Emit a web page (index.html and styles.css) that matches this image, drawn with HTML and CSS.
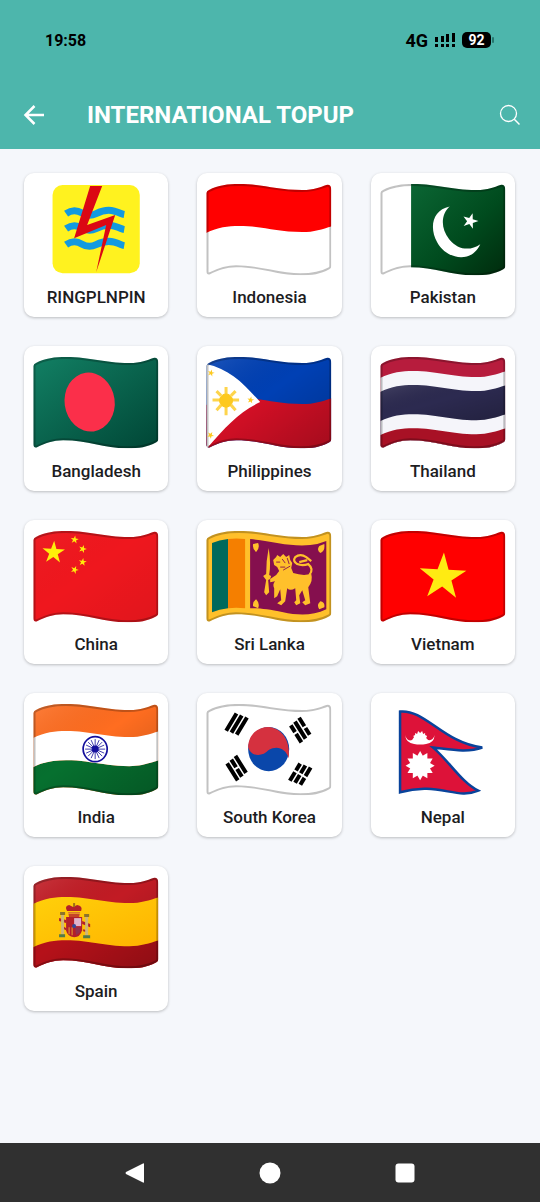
FILE: index.html
```html
<!DOCTYPE html>
<html lang="en">
<head>
<meta charset="utf-8">
<meta name="viewport" content="width=device-width, initial-scale=1">
<title>International Topup</title>
<link rel="stylesheet" href="styles.css">
</head>
<body>
<svg class="defs" width="0" height="0" aria-hidden="true">
  <defs>
    <path id="outline" d="M.5 10Q.5 8 3 7C12 2 22 1 33 1C58 1 70 7 96 7C108 7 114 4 120 2Q125 1 125 7V83Q125 85 123 86C114 91 106 92 94 92C70 92 55 84 30 84C20 84 12 87 4 91Q.5 92 .5 88Z"/>
    <path id="wave" d="M0 8C12 2 22 1 33 1C58 1 70 7 96 7C108 7 116 4 126 1V130H0Z"/>
    <clipPath id="cloth"><use href="#outline"/></clipPath>
    <linearGradient id="shade" x1="0" y1="0" x2="1" y2="1"><stop offset="0" stop-color="#fff" stop-opacity=".12"/><stop offset=".45" stop-color="#000" stop-opacity="0"/><stop offset="1" stop-color="#000" stop-opacity=".22"/></linearGradient>
    <linearGradient id="pak" x1="0" y1="0" x2="1" y2="1"><stop offset="0" stop-color="#0b6634"/><stop offset=".55" stop-color="#004b1e"/><stop offset="1" stop-color="#002a0c"/></linearGradient>
    <linearGradient id="bgd" x1="0" y1="0" x2="1" y2="1"><stop offset="0" stop-color="#128064"/><stop offset="1" stop-color="#004535"/></linearGradient>
    <linearGradient id="gold" x1="0" y1="0" x2="1" y2="1"><stop offset="0" stop-color="#ffd00a"/><stop offset="1" stop-color="#ffb300"/></linearGradient>
    <polygon id="star" points="0,-10 2.25,-3.09 9.51,-3.09 3.63,1.18 5.88,8.09 0,3.82 -5.88,8.09 -3.63,1.18 -9.51,-3.09 -2.25,-3.09"/>
    <use id="edge" href="#outline" fill="none" stroke="#000" stroke-opacity=".24" stroke-width="4"/>
    <use id="fold" href="#outline" fill="url(#shade)"/>
    <path id="ripple" d="M14 28.500C19 25 25 25 30 28S39 31 44 28.500S55 24 62 26S69 29 72 29.500"/>
  </defs>
</svg>

<header class="top">
  <div class="status">
    <span class="time">19:58</span>
    <div class="signals">
      <span class="network">4G</span>
      <svg class="bars" viewBox="0 0 22 14" aria-hidden="true"><g fill="#000"><path d="M1 4h3v5H1zM7 3h3v6H7zM12 1h3v8h-3zM18 0h3v9h-3z"/><path d="M1 11h3v3H1zM7 11h3v3H7zM12 11h3v3h-3zM18 11h3v3h-3z"/></g></svg>
      <span class="battery">92</span>
    </div>
  </div>
  <div class="appbar">
    <button class="icon-button" type="button" aria-label="Back"><svg class="back" viewBox="0 0 22 22"><path d="M11.500 2L2.500 11l9 9M2.500 11h18.500" fill="none" stroke="#fff" stroke-width="2.500"/></svg></button>
    <h1 class="title">INTERNATIONAL TOPUP</h1>
    <button class="icon-button" type="button" aria-label="Search"><svg class="search" viewBox="0 0 22 22"><circle cx="9.500" cy="9.500" r="8" fill="none" stroke="#fff" stroke-width="1.300"/><path d="M15.300 15.300L20.500 20.500" stroke="#fff" stroke-width="1.500"/></svg></button>
  </div>
</header>

<main class="grid">
  <a class="card" href="#ringplnpin">
    <svg class="flag" viewBox="0 0 126 94" aria-hidden="true"><g transform="translate(19 2)"><rect x=".5" width="87" height="88" rx="10" fill="#fff21f"/><g fill="none" stroke="#129ae0" stroke-width="7"><use href="#ripple"/><use href="#ripple" y="15"/><use href="#ripple" y="31"/></g><path d="M38 1H50L35 40L63 30L44 87L54 40L22 53Z" fill="#db0713"/></g></svg>
    <span class="name">RINGPLNPIN</span>
  </a>
  <a class="card" href="#indonesia">
    <svg class="flag" viewBox="0 0 126 94" aria-hidden="true"><g clip-path="url(#cloth)"><rect width="126" height="94" fill="#fff"/><path d="M0 0H126V43C116 46 108 49 96 49C70 49 58 43 33 43C22 43 12 44 0 50Z" fill="#f00"/><use href="#edge"/></g></svg>
    <span class="name">Indonesia</span>
  </a>
  <a class="card" href="#pakistan">
    <svg class="flag" viewBox="0 0 126 94" aria-hidden="true"><g clip-path="url(#cloth)"><rect width="126" height="94" fill="#fff"/><rect x="31" width="95" height="94" fill="url(#pak)"/><use href="#edge"/></g><path d="M69.500 23.500C52 27 49 45 57 59C66 76 91 81 100 61C90 68 78 67 69 56C60 45 61 31 69.500 23.500Z" fill="#fff"/><use href="#star" fill="#fff" transform="translate(90 38) rotate(17) scale(.82)"/></svg>
    <span class="name">Pakistan</span>
  </a>
  <a class="card" href="#bangladesh">
    <svg class="flag" viewBox="0 0 126 94" aria-hidden="true"><g clip-path="url(#cloth)"><rect width="126" height="94" fill="url(#bgd)"/><ellipse cx="56.500" cy="46" rx="25" ry="29.500" fill="#fb2f4a" transform="rotate(-8 56.500 46)"/><use href="#edge"/></g></svg>
    <span class="name">Bangladesh</span>
  </a>
  <a class="card" href="#philippines">
    <svg class="flag" viewBox="0 0 126 94" aria-hidden="true"><g clip-path="url(#cloth)"><rect width="126" height="94" fill="#0040b4"/><use href="#wave" y="41" fill="#d20f25"/><use href="#fold"/><path d="M0 8C24 13 38 28 54 46C33 56 20 70 1 92Z" fill="#fff"/><use href="#edge"/></g>
      <g fill="#fdc91f" stroke="#fdc91f"><g stroke-width="3" stroke-opacity=".8"><path d="M20 31V39M20 50V59M6.500 44H14M26 44H33M10.500 35L15 39.500M25 49L29.500 54M29.500 35L25 39.500M15 49L10.500 54"/></g><circle cx="20" cy="44.500" r="6.500"/></g>
      <g fill="#fdc91f"><use href="#star" transform="translate(5 17) rotate(15) scale(.36)"/><use href="#star" transform="translate(44.500 44) rotate(10) scale(.36)"/><use href="#star" transform="translate(4.500 79) rotate(30) scale(.36)"/></g></svg>
    <span class="name">Philippines</span>
  </a>
  <a class="card" href="#thailand">
    <svg class="flag" viewBox="0 0 126 94" aria-hidden="true"><g clip-path="url(#cloth)"><rect width="126" height="94" fill="#b71c3d"/><use href="#wave" y="14" fill="#f5f5fa"/><use href="#wave" y="28" fill="#2c2a50"/><use href="#wave" y="57" fill="#f5f5fa"/><use href="#wave" y="71" fill="#a81125"/><path d="M0 36C12 30 22 29 33 29C58 29 70 35 96 35C108 35 116 32 126 29V58C116 61 108 64 96 64C70 64 58 58 33 58C22 58 12 59 0 65Z" fill="url(#shade)"/><use href="#edge"/></g></svg>
    <span class="name">Thailand</span>
  </a>
  <a class="card" href="#china">
    <svg class="flag" viewBox="0 0 126 94" aria-hidden="true"><g clip-path="url(#cloth)"><rect width="126" height="94" fill="#ef171e"/><rect width="126" height="94" fill="url(#shade)" opacity=".3"/><use href="#edge"/></g><g fill="#ffee0a"><use href="#star" transform="translate(20.500 22.500) rotate(3) scale(1.180)"/><use href="#star" transform="translate(41.500 9.700) rotate(8) scale(.42)"/><use href="#star" transform="translate(49.500 19) rotate(18) scale(.42)"/><use href="#star" transform="translate(49.500 32) rotate(8) scale(.42)"/><use href="#star" transform="translate(41.500 39.700) rotate(22) scale(.42)"/></g></svg>
    <span class="name">China</span>
  </a>
  <a class="card" href="#sri-lanka">
    <svg class="flag" viewBox="0 0 126 94" aria-hidden="true"><g clip-path="url(#cloth)"><rect width="126" height="94" fill="#ffc02b"/><use href="#edge"/></g>
      <path d="M6 13Q13 10 22 9V78Q13 79 6 82Z" fill="#00695c"/><path d="M22 9Q30 8 39 9V78Q30 77 22 78Z" fill="#f57f00"/>
      <path d="M44 9C66 11 84 17 104 15Q113 14 120 11V79C106 86 91 85 77 82C62 79 54 78 44 78Z" fill="#850f4e"/>
      <g fill="#ffc02b">
        <path d="M47 14L52 13Q54 18 50 22Q46 19 47 14ZM118 14L113 16Q110 20 114 23Q119 21 118 14ZM47 76L52 78Q54 73 50 69Q46 72 47 76ZM118 77L113 79Q110 75 114 71Q119 72 118 77Z"/>
        <path d="M62.500 18Q65 34 63 45L65 46L64 49L62 50L63 62L60 65L58 62L60 50L57 46L60 44Q60 30 62.500 18Z"/>
        <path d="M67 30L70 27L71 25L74 27L77 24L80 27L83 25L84 30L86 33L85 38L87 43Q96 46 105 44Q107 51 102 57L104 73L99 75L96 72L99 70L96 60L93 65L94 73L90 75L88 72L90 70L89 58Q84 61 81 58L79 71L75 75L71 73L75 70L74 59L71 66L68 68L68 58Q66 54 69 51L64 52L64 49L70 45L73 41L71 37L68 35Z"/>
      </g>
      <path d="M103 45Q108 39 102 34Q96 36 91 34Q86 31 89 27Q94 23 100 27L105 31M93 32L101 30" fill="none" stroke="#ffc02b" stroke-width="2.200"/>
      <path d="M70 32H74M76 29L79 33M74 37H79M77 40L84 36M81 28L83 34" stroke="#850f4e" stroke-width=".9" fill="none"/>
    </svg>
    <span class="name">Sri Lanka</span>
  </a>
  <a class="card" href="#vietnam">
    <svg class="flag" viewBox="0 0 126 94" aria-hidden="true"><g clip-path="url(#cloth)"><rect width="126" height="94" fill="#f00"/><use href="#edge"/></g><use href="#star" fill="#ffeb12" transform="translate(62.500 47) rotate(3) scale(2.450)"/></svg>
    <span class="name">Vietnam</span>
  </a>
  <a class="card" href="#india">
    <svg class="flag" viewBox="0 0 126 94" aria-hidden="true"><g clip-path="url(#cloth)"><rect width="126" height="94" fill="#ff6d20"/><use href="#wave" y="56" fill="#06702f"/><use href="#fold"/><path d="M0 35C12 29 22 28 33 28C58 28 70 34 96 34C108 34 116 31 126 28V57C116 60 108 63 96 63C70 63 58 57 33 57C22 57 12 58 0 64Z" fill="#fff"/><use href="#edge"/></g>
      <g transform="translate(62 46)" fill="none" stroke="#140f9c"><ellipse rx="12" ry="12.500" stroke-width="1.700"/><path d="M0-10V10M-10 0H10M-7-7L7 7M7-7L-7 7M-4-9L4 9M4-9L-4 9M-9-4L9 4M9-4L-9 4" stroke-width=".8"/><circle r="3" fill="#140f9c"/></g></svg>
    <span class="name">India</span>
  </a>
  <a class="card" href="#south-korea">
    <svg class="flag" viewBox="0 0 126 94" aria-hidden="true"><g clip-path="url(#cloth)"><rect width="126" height="94" fill="#fff"/><use href="#edge"/></g>
      <g transform="translate(62.500 46)"><ellipse rx="20.500" ry="22" fill="#0a47aa"/><path d="M-20.500-2C-20-15-11-22 0-22C12-21 22-10 20 9C17-1 8-4 0 1C-6 8-18 8-20.500-2Z" fill="#d5313f"/></g>
      <g stroke="#000" stroke-width="4">
        <path transform="translate(30.500 21) rotate(-59)" d="M-11-5.500H9M-10 0H10M-9 5.500H11"/>
        <path transform="translate(94 27) rotate(58)" d="M-11-5.500H-1M1-5.500H9M-10 0H10M-9 5.500H-1M1 5.500H11"/>
        <path transform="translate(30.500 65) rotate(58)" d="M-11-5.500H9M-10 0H-1M1 0H10M-9 5.500H11"/>
        <path transform="translate(94 71) rotate(-59)" d="M-11-5.500H-1M1-5.500H9M-10 0H-1M1 0H10M-9 5.500H-1M1 5.500H11"/>
      </g></svg>
    <span class="name">South Korea</span>
  </a>
  <a class="card" href="#nepal">
    <svg class="flag" viewBox="0 0 126 94" aria-hidden="true"><path d="M20 8.500C45 6 62 39 102 44.500C87 50 68 46 53 44.500C69 58 81 79 98 87.500C76 97 58 78 20 89Z" fill="#dd1239" stroke="#08439b" stroke-width="2.500"/>
      <g fill="#fff"><path d="M25 32Q27 39 32 37L34 34L33 33L35 32L35 30L37 31L38 28L40 30L42 28L43 31L45 30L45 32L47 33L46 35L48 37Q53 38 54.500 32Q54 40 46 41Q40 42 34 41Q26 40 25 32Z"/>
      <g transform="translate(40 62.500)"><polygon id="ray" points="0,-14.5 12.56,7.25 -12.56,7.25"/><use href="#ray" transform="rotate(30)"/><use href="#ray" transform="rotate(60)"/><use href="#ray" transform="rotate(90)"/></g></g></svg>
    <span class="name">Nepal</span>
  </a>
  <a class="card" href="#spain">
    <svg class="flag" viewBox="0 0 126 94" aria-hidden="true"><g clip-path="url(#cloth)"><rect width="126" height="94" fill="#c21b24"/><use href="#wave" y="63" fill="#b51119"/><use href="#fold"/><path d="M0 28C12 22 22 21 33 21C58 21 70 27 96 27C108 27 116 24 126 21V64C116 67 108 70 96 70C70 70 58 64 33 64C22 64 12 65 0 71Z" fill="url(#gold)"/><use href="#edge"/></g>
      <g fill="#b3202a"><path d="M34 35Q31 30 36 29L40 31L44 29Q50 30 48 35Z"/><path d="M33 41H49V54Q47 61 41 61Q34 60 33 54Z"/><path d="M26 42L33 44V47L26 45ZM49 45L57 48V51L49 48ZM30 50L33 52V54L29 52ZM50 53L54 54V56L50 55Z"/></g>
      <path d="M40 27H42V31H40Z" fill="#9c6d18"/><path d="M35 36H47L46 41H36Z" fill="#c64427"/><path d="M35 37H47" stroke="#fbc234"/><path d="M28 39H31V58H28ZM52 41H55V60H52Z" fill="#cfb678"/>
      <path d="M27 36H32V39H27ZM51 38H56V41H51Z" fill="#8c742b"/><path d="M26 58H32V61H26ZM50 59H57V62H50Z" fill="#547b48"/>
      <path d="M41 42H48V50H41Z" fill="#dfb3cb"/><path d="M36 51V58M39 51V59" stroke="#e5a32d"/><path d="M42 51H47V56L43 59Z" fill="#91304e"/><circle cx="41" cy="50" r="2" fill="#34489a"/></svg>
    <span class="name">Spain</span>
  </a>
</main>

<nav class="system" aria-label="System">
  <button class="system-button" type="button" aria-label="Back"><svg class="system-icon" viewBox="0 0 22 22"><path d="M20 2V20Q20 21 19 20.500L2 12Q1 11 2 10L19 1.500Q20 1 20 2Z" fill="#fff"/></svg></button>
  <button class="system-button" type="button" aria-label="Home"><svg class="system-icon" viewBox="0 0 22 22"><circle cx="11" cy="11" r="10.500" fill="#fff"/></svg></button>
  <button class="system-button" type="button" aria-label="Recent apps"><svg class="system-icon" viewBox="0 0 22 22"><rect x="1.500" y="1.500" width="19" height="19" rx="3" fill="#fff"/></svg></button>
</nav>
</body>
</html>
```

FILE: styles.css
```css
* {
  box-sizing: border-box;
}

body {
  margin: 0;
  min-height: 100vh;
  display: flex;
  flex-direction: column;
  background: #f5f7fb;
  color: #1d1d1f;
  font-family: Roboto, "Liberation Sans", sans-serif;
}

button {
  border: 0;
  padding: 0;
  background: none;
  cursor: pointer;
}

.defs {
  position: absolute;
}

.top {
  background: #4db6ac;
}

.status {
  display: flex;
  align-items: center;
  justify-content: space-between;
  height: 80px;
  padding: 0 45px;
  color: #000;
  font-weight: 700;
}

.time {
  font-size: 16px;
}

.signals {
  display: flex;
  align-items: center;
  gap: 6px;
}

.network {
  font-size: 18px;
}

.bars {
  width: 22px;
  height: 14px;
}

.battery {
  position: relative;
  width: 29px;
  margin-right: 4px;
  border-radius: 5px;
  background: #000;
  color: #fff;
  font-size: 14px;
  line-height: 16px;
  text-align: center;
}

.battery::after {
  content: "";
  position: absolute;
  top: 5px;
  right: -3px;
  width: 2px;
  height: 6px;
  border-radius: 1px;
  background: #26766e;
}

.appbar {
  display: flex;
  align-items: center;
  height: 69px;
  padding: 0 19px 0 23px;
}

.icon-button,
.system-button {
  display: grid;
  place-items: center;
}

.back,
.search,
.system-icon {
  display: block;
  width: 22px;
  height: 22px;
}

.title {
  flex: 1;
  margin: 0 0 0 42px;
  color: #fff;
  font-size: 24px;
  font-weight: 700;
  line-height: 32px;
}

.grid {
  flex: 1;
  display: grid;
  grid-template-columns: repeat(3, 1fr);
  align-content: start;
  gap: 29px;
  padding: 24px 25px 24px 24px;
}

.card {
  display: flex;
  flex-direction: column;
  align-items: center;
  gap: 10px;
  aspect-ratio: 1;
  padding: 10px 9px;
  border-radius: 10px;
  background: #fff;
  box-shadow: 0 1px 3px rgb(0 0 0 / 24%);
  color: inherit;
  text-decoration: none;
}

.flag {
  display: block;
  width: 100%;
}

.name {
  font-size: 17px;
  font-weight: 500;
  line-height: 20px;
}

.system {
  display: grid;
  grid-template-columns: repeat(3, 1fr);
  height: 59px;
  padding: 0 12.5%;
  background: #303030;
}
```
